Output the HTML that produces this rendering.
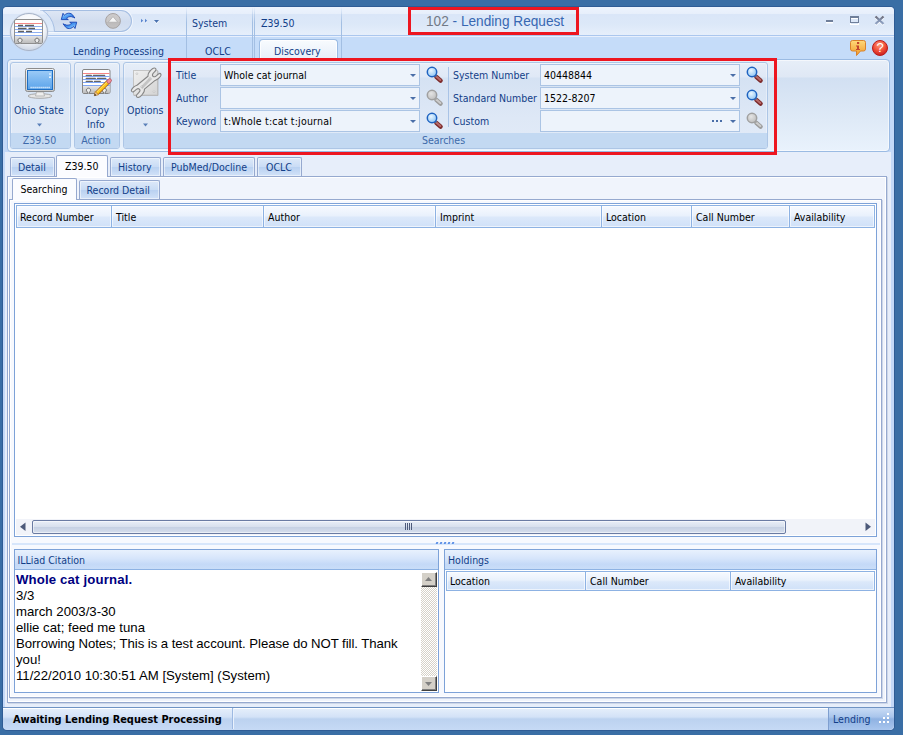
<!DOCTYPE html>
<html><head><meta charset="utf-8"><title>102 - Lending Request</title>
<style>
*{box-sizing:border-box;margin:0;padding:0}
html,body{width:903px;height:735px;overflow:hidden;background:#3a6ea5}
body{position:relative;font-family:"DejaVu Sans Condensed","Liberation Sans",sans-serif;font-size:10.5px;color:#123e88;line-height:13px}
.a{position:absolute}
.t{position:absolute;white-space:nowrap;margin-top:1px}
.k{color:#000}
svg{position:absolute;overflow:visible}
#win{left:3px;top:7px;width:891px;height:723px;border-radius:4px 4px 4px 4px;background:#c4d9f8;overflow:hidden;box-shadow:0 0 0 1px #2f5c95}
#title{left:0;top:0;width:891px;height:28px;background:linear-gradient(#edf3fd 0,#e7effb 7px,#dae6f8 7px,#dce8f8 17px,#e6effb 28px)}
#tabs{left:0;top:28px;width:891px;height:25px;background:#c5dcf9;border-top:1px solid #abc7ee;box-shadow:inset 0 1px 0 #e8f0fd}
#form{left:2px;top:145px;width:886px;height:555px;background:#e7eefa}
.vsep{position:absolute;top:7px;width:1px;height:52px;background:linear-gradient(rgba(150,178,218,0),#a3bfe3 30%,#a3bfe3)}
.grp{border:1px solid #adc6e6;border-radius:3px;background:linear-gradient(#e6eef8 0,#dfe8f6 14px,#d5e2f3 15px,#dee8f6 55px,#e2ebf8 100%);overflow:hidden;box-shadow:inset 0 0 0 1px rgba(255,255,255,.35)}
.grp .cap{position:absolute;left:0;right:0;bottom:0;height:15px;background:#c3d9f2;text-align:center;line-height:14px;color:#3e6aaa}
.inp{position:absolute;height:22px;border:1px solid #abc4e4;background:#edf3fb;color:#000;padding:4px 0 0 3px;white-space:nowrap}
.inp:after{content:"";position:absolute;right:3px;top:9px;border:3px solid transparent;border-top:3.500px solid #4a6ea8;border-bottom:0}
.tab{position:absolute;border:1px solid #96a9cf;border-bottom:0;border-radius:2px 2px 0 0;background:linear-gradient(#dde9f9,#c9dcf5 50%,#b9d1f1 51%,#d2e2f8);text-align:center;box-shadow:inset 0 0 0 1px rgba(255,255,255,.5)}
.tab.on{background:#fbfcff;color:#000;border-color:#96a9cf;box-shadow:none}
.hdr{position:absolute;border:1px solid #8db2e3;background:linear-gradient(#f7faff 0,#e9f1fc 45%,#dbe8fa 55%,#d0e1f8 100%);color:#000;padding:5px 0 0 4px;white-space:nowrap;box-shadow:inset 0 0 0 1px rgba(255,255,255,.6)}
.ghead{position:absolute;height:20px;border-bottom:1px solid #8db2e3;background:linear-gradient(#e8f1fd 0,#d6e5fb 45%,#c4d9f7 75%,#c9ddf8 100%)}
</style></head><body>
<div id="win" class="a">
 <div id="title" class="a"></div>
 <div id="tabs" class="a"></div>
 <div id="form" class="a"></div>
</div>
<!--TITLE-->
<!-- context separators -->
<div class="vsep" style="left:186px"></div>
<div class="vsep" style="left:252px"></div>
<div class="vsep" style="left:254px"></div>
<div class="vsep" style="left:341px"></div>
<!-- QAT pill -->
<div class="a" style="left:40px;top:10px;width:92px;height:22px;border:1px solid #a5bee2;border-left:0;border-radius:0 11px 11px 0;background:linear-gradient(#dde6f4,#d0dcef 55%,#d7e2f2);box-shadow:0 0 0 1px rgba(255,255,255,.6)"></div>
<!-- app button -->
<svg style="left:36px;top:8px" width="26" height="26" viewBox="36 8 26 26"><defs><linearGradient id="rg" x1="0" y1="6" x2="0" y2="35" gradientUnits="userSpaceOnUse"><stop offset="0" stop-color="#ebf2fc"/><stop offset=".28" stop-color="#e6eefa"/><stop offset=".3" stop-color="#dae6f7"/><stop offset=".6" stop-color="#dce8f8"/><stop offset="1" stop-color="#e6effb"/></linearGradient><clipPath id="rc"><rect x="36" y="10.500" width="26" height="21"/></clipPath></defs><g clip-path="url(#rc)"><circle cx="29" cy="32" r="25.500" fill="url(#rg)"/><circle cx="29" cy="32" r="25.500" fill="none" stroke="#a5bee2"/></g></svg>
<svg style="left:8px;top:11px" width="42" height="42" viewBox="0 0 42 42">
 <defs>
  <radialGradient id="ab" cx="50%" cy="35%" r="65%"><stop offset="0" stop-color="#ffffff"/><stop offset=".65" stop-color="#f4f6fa"/><stop offset="1" stop-color="#ccd5e3"/></radialGradient>
  <linearGradient id="abs" x1="0" y1="0" x2="0" y2="1"><stop offset="0" stop-color="#b9c3d6"/><stop offset=".6" stop-color="#a3b0c8"/><stop offset="1" stop-color="#6f86ad"/></linearGradient><linearGradient id="cg" x1="0" y1="0" x2="0" y2="1"><stop offset="0" stop-color="#e4e4e4"/><stop offset="1" stop-color="#bdbdbd"/></linearGradient>
 </defs>
 <circle cx="21" cy="21" r="19.5" fill="#c9d4e6" opacity=".7"/>
 <circle cx="21" cy="21" r="18.5" fill="url(#ab)" stroke="#a8b4c9" stroke-width="1"/>
 <rect x="6.5" y="8.500" width="28" height="24" rx="1.500" fill="#fff" stroke="#8e8e8e"/>
 <rect x="7" y="25" width="27" height="7" fill="url(#cg)"/>
 <path d="M7 12.500H34" stroke="#f28a8a"/>
 <path d="M7 15.500H34M7 18.500H34M7 21.500H34M7 24.500H34" stroke="#8fb0f2"/>
 <path d="M10 14.500H15M17 14.500H26M10 17.500H18.500M20.500 17.500H27M10 20.500H16M18 20.500H24" stroke="#5f5f5f" stroke-width="1.300"/>
 <path d="M11.200 32.500V31.200A2.100 2.100 0 1 1 12.800 31.200V32.500M28.200 32.500V31.200A2.100 2.100 0 1 1 29.800 31.200V32.500" fill="#ececec" stroke="#6f6f6f"/>
</svg>
<!-- refresh -->
<svg style="left:61px;top:13px" width="16" height="16" viewBox="0 0 16 16">
 <defs><linearGradient id="rf" x1="0" y1="0" x2="1" y2="1"><stop offset="0" stop-color="#bfe2ff"/><stop offset=".45" stop-color="#4d9cf2"/><stop offset="1" stop-color="#1d55c9"/></linearGradient></defs>
 <g><path d="M2 .300L.300 6.600H7.300L5.600 5.400C6.500 4 8.500 3.300 10.500 3.700C12 4 13 4.600 13.900 5L11.300 1.600C10 .300 8 -.100 6.200 .500C5 .900 4 1.600 3.300 2.300Z" fill="url(#rf)" stroke="#1443b4" stroke-width=".9" stroke-linejoin="round"/></g>
 <g transform="rotate(180 8 7.900)"><path d="M2 .300L.300 6.600H7.300L5.600 5.400C6.500 4 8.500 3.300 10.500 3.700C12 4 13 4.600 13.900 5L11.300 1.600C10 .300 8 -.100 6.200 .500C5 .900 4 1.600 3.300 2.300Z" fill="url(#rf)" stroke="#1443b4" stroke-width=".9" stroke-linejoin="round"/></g>
</svg>
<!-- gray circle -->
<svg style="left:105px;top:13px" width="16" height="16" viewBox="0 0 16 16">
 <defs><linearGradient id="gc" x1="0" y1="0" x2="0" y2="1"><stop offset="0" stop-color="#cdcbcb"/><stop offset=".55" stop-color="#c9c7c7"/><stop offset=".6" stop-color="#bdbbbb"/><stop offset="1" stop-color="#c4c2c2"/></linearGradient></defs>
 <circle cx="8" cy="7.900" r="7.400" fill="url(#gc)" stroke="#a7a3a3"/>
 <path d="M3.300 9.200L8 3.600L12.700 9.200Z" fill="#f6f6f6" stroke="#a9a7a7" stroke-width=".7" stroke-linejoin="round"/>
</svg>
<svg style="left:140px;top:17px" width="22" height="8" viewBox="0 0 22 8">
 <path d="M1 2.800L3.200 4.800L1 6.800ZM5 2.800L7.200 4.800L5 6.800Z" fill="#fff"/>
 <path d="M1 1.800L3.200 3.800L1 5.800ZM5 1.800L7.200 3.800L5 5.800Z" fill="#5a86cf"/>
 <path d="M14 3.900H19L16.500 6.900Z" fill="#fff"/>
 <path d="M14 2.900H19L16.500 5.900Z" fill="#4a72b0"/>
</svg>
<div class="t" style="left:192px;top:16px">System</div>
<div class="t" style="left:261px;top:16px">Z39.50</div>
<div class="t" style="left:73px;top:44px">Lending Processing</div>
<div class="t" style="left:205px;top:44px">OCLC</div>
<div class="a" style="left:259px;top:39px;width:79px;height:21px;border:1px solid #9bbbe3;border-bottom:0;border-radius:4px 4px 0 0;background:linear-gradient(#f8fbfe,#e6eef9);box-shadow:inset 0 0 0 1px rgba(255,255,255,.8)"></div>
<div class="t" style="left:274px;top:44px">Discovery</div>
<!-- title -->
<div class="t" style="left:425.500px;top:10.500px;font-family:'Liberation Sans',sans-serif;font-size:14px;line-height:18px;color:#3867b2;transform:scaleX(.975);transform-origin:0 0"><span style="color:#727a86">102</span> - Lending Request</div>
<div class="a" style="left:408px;top:7px;width:171px;height:28px;border:3px solid #ed1620"></div>
<!-- window controls -->
<svg style="left:824px;top:14px" width="64" height="12" viewBox="0 0 64 12">
 <path d="M2 7.500H9" stroke="#fff" stroke-width="2" transform="translate(0,1)"/>
 <path d="M2 7H9" stroke="#6f7f9a" stroke-width="2"/>
 <rect x="26.500" y="3.500" width="8" height="6" fill="none" stroke="#fff" transform="translate(0,1)"/>
 <rect x="26.500" y="3.500" width="8" height="5" fill="none" stroke="#6f7f9a"/>
 <rect x="26" y="2" width="9" height="2" fill="#6f7f9a"/>
 <defs><linearGradient id="xg" x1="0" y1="2" x2="0" y2="10" gradientUnits="userSpaceOnUse"><stop offset="0" stop-color="#6b6770"/><stop offset=".5" stop-color="#7f8fae"/><stop offset="1" stop-color="#93a5c4"/></linearGradient></defs><path d="M51.500 2.500L59.500 10M59.500 2.500L51.500 10" stroke="#fff" stroke-width="2" transform="translate(0,1)"/>
 <path d="M51.500 2.500L59.500 10M59.500 2.500L51.500 10" stroke="url(#xg)" stroke-width="2.300"/>
</svg>
<!-- info balloon -->
<svg style="left:850px;top:40px" width="16" height="16" viewBox="0 0 16 16">
 <defs><linearGradient id="ib" x1="0" y1="0" x2="0" y2="1"><stop offset="0" stop-color="#ffd979"/><stop offset="1" stop-color="#f19a2a"/></linearGradient></defs>
 <path d="M2.500 .500H13.500A2 2 0 0 1 15.500 2.500V9A2 2 0 0 1 13.500 11H10.500L6.500 15.500V11H2.500A2 2 0 0 1 .500 9V2.500A2 2 0 0 1 2.500 .500Z" fill="url(#ib)" stroke="#d9822b"/>
 <rect x="7" y="2" width="2.200" height="2" fill="#c4452d"/>
 <path d="M6 5.500H9V9H10V10H6V9H7V6.500H6Z" fill="#c4452d"/>
</svg>
<!-- help -->
<svg style="left:872px;top:40px" width="16" height="16" viewBox="0 0 16 16">
 <defs><radialGradient id="hb" cx="45%" cy="30%" r="70%"><stop offset="0" stop-color="#ff9a7a"/><stop offset=".6" stop-color="#ef4a35"/><stop offset="1" stop-color="#c81e1e"/></radialGradient></defs>
 <circle cx="8" cy="8" r="7.500" fill="url(#hb)" stroke="#b81c1c"/>
 <text x="8" y="12.300" text-anchor="middle" font-family="Liberation Sans,sans-serif" font-size="13" fill="#fff">?</text>
</svg>

<!--RIBBON-->
<!-- ribbon panel -->
<div class="a" style="left:7px;top:59px;width:883px;height:93px;border:1px solid #9bbbe3;border-radius:4px;background:linear-gradient(#e7eef8 0,#dfe8f5 17px,#d2e0f2 18px,#dfeaf7 60px,#e9f2fc 100%);box-shadow:inset 0 0 0 1px rgba(255,255,255,.55)"></div>
<div class="a grp" style="left:10px;top:62px;width:61px;height:87px"><div class="cap" style="padding-right:2px">Z39.50</div></div>
<div class="a grp" style="left:74px;top:62px;width:46px;height:87px"><div class="cap" style="padding-right:2px">Action</div></div>
<div class="a grp" style="left:123px;top:62px;width:645px;height:87px"><div class="cap" style="padding-right:4px">Searches</div></div>
<!-- monitor -->
<svg style="left:24px;top:67px" width="32" height="32" viewBox="0 0 32 32">
 <defs>
  <linearGradient id="ms" x1="0" y1="0" x2="0" y2="1"><stop offset="0" stop-color="#9ccbf7"/><stop offset="1" stop-color="#5aa3ea"/></linearGradient>
  <linearGradient id="mf" x1="0" y1="0" x2="0" y2="1"><stop offset="0" stop-color="#f4f4f4"/><stop offset="1" stop-color="#c9c9c9"/></linearGradient>
 </defs>
 <ellipse cx="16" cy="29" rx="12" ry="2.300" fill="#e6e6e6" stroke="#9a9a9a" stroke-width=".8"/>
 <path d="M12.500 25H19.500L20.500 29H11.500Z" fill="#eee" stroke="#a5a5a5" stroke-width=".7"/>
 <rect x="1.500" y="1.500" width="29" height="23" rx="2" fill="url(#mf)" stroke="#8c8c8c"/>
 <rect x="3.500" y="3.500" width="25" height="19" fill="url(#ms)" stroke="#1f6fc4"/>
 <rect x="25" y="6.500" width="2" height="1" fill="#fff"/><rect x="25" y="9.500" width="2" height="1.300" fill="#fff"/>
 <path d="M6.500 20.500H26" stroke="#eaf4ff" stroke-width="1.500" stroke-dasharray="1.200 .8"/>
</svg>
<!-- card + pencil -->
<svg style="left:81px;top:68px" width="32" height="30" viewBox="0 0 32 30">
 <defs><linearGradient id="pg" x1="0" y1="0" x2="1" y2="1"><stop offset="0" stop-color="#ffd24a"/><stop offset="1" stop-color="#f09a10"/></linearGradient></defs>
 <rect x="1.500" y="1.500" width="27.500" height="24" rx="1.500" fill="#fff" stroke="#858585"/>
 <rect x="2" y="18" width="26.500" height="7" fill="url(#cg)"/>
 <path d="M2 5.500H28.500" stroke="#f58585"/>
 <path d="M2 8.500H28.500M2 11.500H28.500M2 14.500H28.500M2 17.500H28.500" stroke="#7fa6f5"/>
 <path d="M5.300 7.400H10.300M12.400 7.400H23.600M5.300 10.400H14.300M16.500 10.400H24.700M5.300 13.400H11.300M13.500 13.400H19.200" stroke="#666" stroke-width="1.400" stroke-linecap="round"/>
 <path d="M6.700 25.500V24.200A2.100 2.100 0 1 1 8.300 24.200V25.500M22.500 25.500V24.200A2.100 2.100 0 1 1 24.100 24.200V25.500" fill="#ececec" stroke="#6f6f6f"/>
 <path d="M15.800 25.200L27.200 13.900" stroke="#a85f06" stroke-width="4.400"/>
 <path d="M15.800 25.200L27.200 13.900" stroke="#ffc81e" stroke-width="2.800"/>
 <path d="M15.300 24.300L26.500 13.200" stroke="#ffe98a" stroke-width=".9"/>
 <path d="M13.300 27.700L14.200 23.600L17.400 26.800Z" fill="#f3cfa0" stroke="#a85f06" stroke-width=".6"/>
 <path d="M13.300 27.700L13.800 25.700L15.300 27.200Z" fill="#1a1a1a"/>
 <path d="M26.700 14.400L27.700 13.400" stroke="#8d8d8d" stroke-width="4.400"/>
 <path d="M27.700 13.400L28.600 12.500" stroke="#b35560" stroke-width="4.400" stroke-linecap="round"/>
 <path d="M27.700 13.400L28.600 12.500" stroke="#f08d98" stroke-width="3" stroke-linecap="round"/>
</svg>
<!-- options -->
<svg style="left:130px;top:66px" width="32" height="33" viewBox="0 0 32 33">
 <defs><linearGradient id="pl" x1="0" y1="0" x2="1" y2="1"><stop offset="0" stop-color="#f0f0f0"/><stop offset="1" stop-color="#d4d4d4"/></linearGradient>
 <linearGradient id="wr" x1="0" y1="0" x2="1" y2="1"><stop offset="0" stop-color="#fdfdfd"/><stop offset=".5" stop-color="#e6e6e6"/><stop offset="1" stop-color="#f6f6f6"/></linearGradient></defs>
 <rect x="3.500" y="4.500" width="24" height="24.500" fill="url(#pl)" stroke="#c4c4c4"/>
 <path d="M4 29.500H28V5" fill="none" stroke="#b2b2b2" stroke-width=".8"/>
 <circle cx="6.900" cy="7.700" r=".9" fill="#fafafa" stroke="#aaa" stroke-width=".5"/><circle cx="24" cy="25.700" r=".9" fill="#fafafa" stroke="#aaa" stroke-width=".5"/>
 <path d="M17.95 10.3C18.02 9.85 18.02 8.5 18.4 7.6C18.77 6.7 19.53 5.72 20.2 4.9C20.87 4.08 21.68 3.18 22.4 2.7C23.12 2.22 23.9 1.93 24.5 2C25.1 2.07 25.85 2.62 26 3.1C26.15 3.58 25.85 4.22 25.4 4.9C24.95 5.58 23.8 6.52 23.3 7.2C22.8 7.88 22.4 8.45 22.4 9C22.4 9.55 22.8 10.25 23.3 10.5C23.8 10.75 24.65 10.83 25.4 10.5C26.15 10.17 27.1 9.02 27.8 8.5C28.5 7.98 29.07 7.4 29.6 7.4C30.13 7.4 30.85 8.02 31 8.5C31.15 8.98 31.03 9.55 30.5 10.3C29.97 11.05 28.7 12.32 27.8 13C26.9 13.68 25.55 14.17 25.1 14.4L14.45 23.1C14.38 23.55 14.38 24.9 14 25.8C13.62 26.7 12.87 27.68 12.2 28.5C11.53 29.32 10.72 30.22 10 30.7C9.28 31.18 8.5 31.47 7.9 31.4C7.3 31.33 6.55 30.78 6.4 30.3C6.25 29.82 6.55 29.18 7 28.5C7.45 27.82 8.6 26.88 9.1 26.2C9.6 25.52 10 24.95 10 24.4C10 23.85 9.6 23.15 9.1 22.9C8.6 22.65 7.75 22.57 7 22.9C6.25 23.23 5.3 24.38 4.6 24.9C3.9 25.42 3.33 26 2.8 26C2.27 26 1.55 25.38 1.4 24.9C1.25 24.42 1.37 23.85 1.9 23.1C2.43 22.35 3.7 21.08 4.6 20.4C5.5 19.72 6.85 19.23 7.3 19Z" fill="url(#wr)" stroke="#858585" stroke-width="1.100" stroke-linejoin="round"/>
 <path d="M11.500 22L21 12" stroke="#c4c4c4" stroke-width="2.600"/>
 <circle cx="20" cy="12.900" r=".9" fill="#fff" stroke="#9a9a9a" stroke-width=".5"/><circle cx="11.800" cy="20.800" r=".9" fill="#fff" stroke="#9a9a9a" stroke-width=".5"/>
</svg>
<div class="t" style="left:14px;top:103px">Ohio State</div>
<div class="t" style="left:85px;top:103px">Copy</div>
<div class="t" style="left:87px;top:117px">Info</div>
<div class="t" style="left:127px;top:103px">Options</div>
<svg style="left:37px;top:123px" width="6" height="4"><path d="M0 .500H5L2.500 3.500Z" fill="#5a7fb8"/></svg>
<svg style="left:143px;top:123px" width="6" height="4"><path d="M0 .500H5L2.500 3.500Z" fill="#5a7fb8"/></svg>

<div class="t" style="left:176px;top:68px">Title</div>
<div class="t" style="left:176px;top:91px">Author</div>
<div class="t" style="left:176px;top:114px">Keyword</div>
<div class="inp" style="left:220px;top:64px;width:200px">Whole cat journal</div>
<div class="inp" style="left:220px;top:87px;width:200px"></div>
<div class="inp" style="left:220px;top:110px;width:200px;letter-spacing:.2px">t:Whole t:cat t:journal</div>
<div class="a" style="left:448px;top:67px;width:1px;height:60px;background:#a9c3e6"></div>
<div class="t" style="left:453px;top:68px">System Number</div>
<div class="t" style="left:453px;top:91px">Standard Number</div>
<div class="t" style="left:453px;top:114px">Custom</div>
<div class="inp" style="left:540px;top:64px;width:200px">40448844</div>
<div class="inp" style="left:540px;top:87px;width:200px">1522-8207</div>
<div class="inp" style="left:540px;top:110px;width:200px"></div>
<div class="a" style="left:712px;top:120px;width:2px;height:2px;background:#4a6ea8;box-shadow:4px 0 #4a6ea8,8px 0 #4a6ea8"></div>
<!-- magnifiers -->
<svg width="0" height="0"><defs>
 <radialGradient id="lz" cx="40%" cy="35%" r="70%"><stop offset="0" stop-color="#eaf6ff"/><stop offset="1" stop-color="#8cc4f4"/></radialGradient>
 <radialGradient id="lzg" cx="40%" cy="35%" r="70%"><stop offset="0" stop-color="#e4e4e4"/><stop offset="1" stop-color="#bdbdbd"/></radialGradient>
  </defs></svg>
<svg style="left:426px;top:66px" width="18" height="18"><g><path d="M10.300 10.800L14.600 14.600" stroke="#7d2b2b" stroke-width="4.400" stroke-linecap="round"/><path d="M10.300 10.500L14.300 14" stroke="#b96b69" stroke-width="2" stroke-linecap="round"/><path d="M8.500 8.500L10.500 10.500" stroke="#5a6a88" stroke-width="2.200"/><circle cx="6" cy="6" r="4.700" fill="url(#lz)" stroke="#1e62c0" stroke-width="1.500"/></g></svg>
<svg style="left:426px;top:89px" width="18" height="18"><g><path d="M10.300 10.800L14.600 14.600" stroke="#9c9c9c" stroke-width="4.400" stroke-linecap="round"/><path d="M10.300 10.500L14.300 14" stroke="#cdcdcd" stroke-width="2" stroke-linecap="round"/><path d="M8.500 8.500L10.500 10.500" stroke="#a2a2a2" stroke-width="2.200"/><circle cx="6" cy="6" r="4.700" fill="url(#lzg)" stroke="#a0a0a0" stroke-width="1.500"/></g></svg>
<svg style="left:426px;top:112px" width="18" height="18"><g><path d="M10.300 10.800L14.600 14.600" stroke="#7d2b2b" stroke-width="4.400" stroke-linecap="round"/><path d="M10.300 10.500L14.300 14" stroke="#b96b69" stroke-width="2" stroke-linecap="round"/><path d="M8.500 8.500L10.500 10.500" stroke="#5a6a88" stroke-width="2.200"/><circle cx="6" cy="6" r="4.700" fill="url(#lz)" stroke="#1e62c0" stroke-width="1.500"/></g></svg>
<svg style="left:746px;top:66px" width="18" height="18"><g><path d="M10.300 10.800L14.600 14.600" stroke="#7d2b2b" stroke-width="4.400" stroke-linecap="round"/><path d="M10.300 10.500L14.300 14" stroke="#b96b69" stroke-width="2" stroke-linecap="round"/><path d="M8.500 8.500L10.500 10.500" stroke="#5a6a88" stroke-width="2.200"/><circle cx="6" cy="6" r="4.700" fill="url(#lz)" stroke="#1e62c0" stroke-width="1.500"/></g></svg>
<svg style="left:746px;top:89px" width="18" height="18"><g><path d="M10.300 10.800L14.600 14.600" stroke="#7d2b2b" stroke-width="4.400" stroke-linecap="round"/><path d="M10.300 10.500L14.300 14" stroke="#b96b69" stroke-width="2" stroke-linecap="round"/><path d="M8.500 8.500L10.500 10.500" stroke="#5a6a88" stroke-width="2.200"/><circle cx="6" cy="6" r="4.700" fill="url(#lz)" stroke="#1e62c0" stroke-width="1.500"/></g></svg>
<svg style="left:746px;top:112px" width="18" height="18"><g><path d="M10.300 10.800L14.600 14.600" stroke="#9c9c9c" stroke-width="4.400" stroke-linecap="round"/><path d="M10.300 10.500L14.300 14" stroke="#cdcdcd" stroke-width="2" stroke-linecap="round"/><path d="M8.500 8.500L10.500 10.500" stroke="#a2a2a2" stroke-width="2.200"/><circle cx="6" cy="6" r="4.700" fill="url(#lzg)" stroke="#a0a0a0" stroke-width="1.500"/></g></svg>
<div class="a" style="left:168px;top:58px;width:609px;height:97px;border:3px solid #ed1620"></div>

<!--TABS-->
<!-- outer tabs -->
<div class="a" style="left:7px;top:176px;width:880px;height:527px;border:1px solid #96a9cf;background:#f0f4fc;box-shadow:1px 1px 0 #cdd7e8,inset 0 0 0 1px #fff"></div>
<div class="tab" style="left:10px;top:157px;width:45px;height:19px;padding:3px 0 0 7px;text-align:left">Detail</div>
<div class="tab on" style="left:56px;top:155px;width:52px;height:22px;padding:4px 0 0 8px;text-align:left">Z39.50</div>
<div class="tab" style="left:110px;top:157px;width:51px;height:19px;padding:3px 0 0 7px;text-align:left">History</div>
<div class="tab" style="left:163px;top:157px;width:92px;height:19px;padding:3px 0 0 7px;text-align:left">PubMed/Docline</div>
<div class="tab" style="left:257px;top:157px;width:45px;height:19px;padding:3px 0 0 8px;text-align:left">OCLC</div>
<!-- inner tabs -->
<div class="a" style="left:9px;top:199px;width:873px;height:499px;border:1px solid #96a9cf;background:#f7f9fe;box-shadow:1px 1px 0 #cdd7e8,inset 0 0 0 1px #fff"></div>
<div class="tab on" style="left:12px;top:178px;width:65px;height:22px;padding:4px 0 0 7.500px;text-align:left">Searching</div>
<div class="tab" style="left:79px;top:180px;width:81px;height:19px;padding:3px 0 0 6.500px;text-align:left">Record Detail</div>

<!--GRID-->
<div class="a" style="left:14px;top:203px;width:863px;height:334px;border:1px solid #7da2d8;background:#fff"></div>
<div class="hdr" style="left:16px;top:205px;width:96px;height:23px;padding-left:3px">Record Number</div>
<div class="hdr" style="left:111px;top:205px;width:153px;height:23px">Title</div>
<div class="hdr" style="left:263px;top:205px;width:173px;height:23px">Author</div>
<div class="hdr" style="left:435px;top:205px;width:167px;height:23px">Imprint</div>
<div class="hdr" style="left:601px;top:205px;width:91px;height:23px">Location</div>
<div class="hdr" style="left:691px;top:205px;width:99px;height:23px">Call Number</div>
<div class="hdr" style="left:789px;top:205px;width:86px;height:23px">Availability</div>
<div class="a" style="left:16px;top:519px;width:859px;height:16px;background:#f1f3f9"></div>
<div class="a" style="left:32px;top:520px;width:754px;height:14px;border:1px solid #6a7ba3;border-radius:2px;background:linear-gradient(#e9eef7,#d7dfed 50%,#c5d0e3 51%,#d6deec);box-shadow:inset 0 0 0 1px rgba(255,255,255,.5)"></div>
<svg style="left:19px;top:522px" width="8" height="10"><path d="M6.500 .500V9L1 4.750Z" fill="#4d5a7a"/></svg>
<svg style="left:864px;top:522px" width="8" height="10"><path d="M1.500 .500V9L7 4.750Z" fill="#4d5a7a"/></svg>
<div class="a" style="left:405px;top:523px;width:1px;height:7px;background:#4d5a7a;box-shadow:2px 0 #4d5a7a,4px 0 #4d5a7a,6px 0 #4d5a7a"></div>
<!-- splitter -->
<div class="a" style="left:12px;top:543px;width:868px;height:2px;background:#d7e6fb"></div>
<div class="a" style="left:436px;top:542px;width:2px;height:2px;background:#5b8fe6;transform:skewX(-20deg);box-shadow:4px 0 #5b8fe6,8px 0 #5b8fe6,12px 0 #5b8fe6,16px 0 #5b8fe6"></div>

<!--BOTTOM-->
<!-- citation -->
<div class="a" style="left:14px;top:549px;width:425px;height:144px;border:1px solid #7da2d8;background:#fff"></div>
<div class="ghead" style="left:15px;top:550px;width:423px"></div>
<div class="t" style="left:17.500px;top:553px">ILLiad Citation</div>
<div class="a k" style="left:16px;top:572px;width:400px;font-family:'Liberation Sans',sans-serif;font-size:13.2px;line-height:16px"><b style="color:#000080;letter-spacing:.15px">Whole cat journal.</b><br>3/3<br>march 2003/3-30<br>ellie cat; feed me tuna<br><span style="letter-spacing:-.06px">Borrowing Notes; This is a test account. Please do NOT fill. Thank</span> you!<br>11/22/2010 10:30:51 AM [System] (System)</div>
<div class="a" style="left:421px;top:572px;width:16px;height:119px;background:#f3f1ea;background-image:repeating-conic-gradient(#fff 0 25%,#d6d2c8 0 50%);background-size:2px 2px"></div>
<div class="a" style="left:421px;top:572px;width:16px;height:15px;background:#d4d0c8;border:1px solid;border-color:#fff #404040 #404040 #fff;box-shadow:inset -1px -1px 0 #808080"></div>
<div class="a" style="left:421px;top:676px;width:16px;height:15px;background:#d4d0c8;border:1px solid;border-color:#fff #404040 #404040 #fff;box-shadow:inset -1px -1px 0 #808080"></div>
<svg style="left:425px;top:576px" width="9" height="6"><path d="M0 5L3.500 1L7 5Z" fill="#808080"/></svg>
<svg style="left:425px;top:681px" width="9" height="6"><path d="M0 1L3.500 5L7 1Z" fill="#808080"/></svg>
<!-- holdings -->
<div class="a" style="left:444px;top:549px;width:433px;height:144px;border:1px solid #7da2d8;background:#fff"></div>
<div class="ghead" style="left:445px;top:550px;width:431px"></div>
<div class="t" style="left:448px;top:553px">Holdings</div>
<div class="hdr" style="left:446px;top:571px;width:140px;height:20px;padding:3px 0 0 3px">Location</div>
<div class="hdr" style="left:585px;top:571px;width:146px;height:20px;padding-top:3px">Call Number</div>
<div class="hdr" style="left:730px;top:571px;width:145px;height:20px;padding-top:3px">Availability</div>

<!--STATUS-->
<div class="a" style="left:3px;top:707px;width:891px;height:23px;border-top:1px solid #6f93c3;border-radius:0 0 5px 5px;background:linear-gradient(#e6effb 0,#d3e2f7 9px,#bcd2f0 11px,#c6daf5 22px);box-shadow:inset 0 1px 0 #fff"></div>
<div class="a" style="left:232px;top:708px;width:1px;height:21px;background:#9db9e2;box-shadow:1px 0 #eaf2fd"></div>
<div class="a" style="left:828px;top:708px;width:66px;height:22px;border-left:1px solid #7f9fd0;border-radius:0 0 5px 0;background:linear-gradient(#c9dcf5 0,#a9c5ec 9px,#8fb2e2 11px,#a9c6ee 22px)"></div>
<div class="t k" style="left:13px;top:712px;font-weight:bold;font-size:10.900px">Awaiting Lending Request Processing</div>
<div class="t" style="left:833px;top:712px">Lending</div>
<div class="a" style="left:887px;top:713px;width:2px;height:2px;background:#fff;box-shadow:0 4px #fff,0 8px #fff,-4px 4px #fff,-4px 8px #fff,-8px 8px #fff"></div>

</body></html>
